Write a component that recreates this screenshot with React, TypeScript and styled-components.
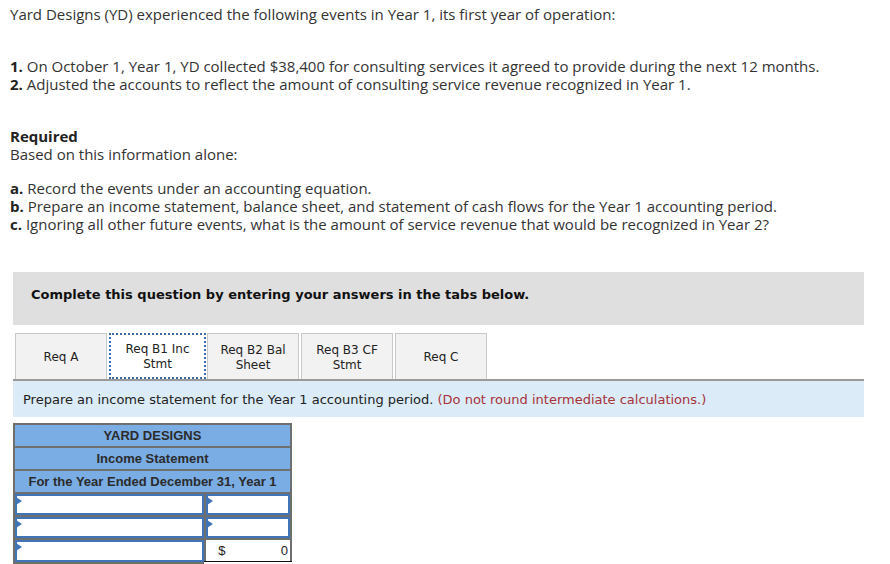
import styled, { createGlobalStyle } from 'styled-components'

const GlobalStyle = createGlobalStyle`
    body {
        margin: 0;
        background: #fff;
        font-family: "Open Sans", "Liberation Sans", sans-serif;
        color: #333;
    }
`

const Page = styled.div`
    padding: 5px 10px 0 10px;
    width: 877px;
    box-sizing: border-box;
`

const Para = styled.p<{ gap?: number }>`
    margin: 0;
    margin-top: ${({ gap }) => gap ?? 0}px;
    font-size: 15px;
    line-height: 18px;
    b {
        color: #222;
        font-weight: 700;
    }
`

const Prompt = styled.div`
    margin: 39px 3px 0 3px;
    background: #dfdfdf;
    height: 53px;
    box-sizing: border-box;
    display: flex;
    align-items: center;
    padding: 0 0 8px 18px;
    font-family: "DejaVu Sans", Verdana, sans-serif;
    font-weight: 700;
    font-size: 13px;
    color: #111;
`

const TabBar = styled.div`
    margin: 8px 3px 0 3px;
    display: flex;
    gap: 2px;
    padding-left: 2px;
    border-bottom: 2px solid #9a9a9a;
`

const Tab = styled.div<{ active?: boolean }>`
    width: ${({ active }) => (active ? 97 : 92)}px;
    height: 46px;
    box-sizing: border-box;
    display: flex;
    align-items: center;
    justify-content: center;
    padding-top: 2px;
    text-align: center;
    font-family: "DejaVu Sans", Verdana, sans-serif;
    font-size: 12px;
    line-height: 15px;
    color: #222;
    background: ${({ active }) => (active ? '#fff' : '#f2f2f2')};
    border: ${({ active }) => (active ? '2px dotted #3b6cb0' : '1px solid #c8c8c8')};
    border-bottom: ${({ active }) => (active ? '2px dotted #3b6cb0' : 'none')};
    margin-bottom: ${({ active }) => (active ? '-2px' : '0')};
    margin-right: ${({ active }) => (active ? '-1px' : '0')};
`

const Instruction = styled.div`
    margin: 0 3px;
    background: #dbebf8;
    height: 36px;
    display: flex;
    align-items: center;
    padding-left: 10px;
    font-family: "DejaVu Sans", Verdana, sans-serif;
    font-size: 13px;
    color: #222;
    span {
        color: #a8323a;
    }
`

const Sheet = styled.table`
    margin: 6px 0 0 3px;
    border-collapse: collapse;
    width: 279px;
    font-family: "Liberation Sans", Arial, sans-serif;
`

const HeadCell = styled.td`
    background: #7aade4;
    border: 2px solid #6f6f6f;
    height: 21px;
    padding: 0;
    text-align: center;
    font-size: 13px;
    font-weight: 700;
    color: #2b2b2b;
`

const Cell = styled.td<{ w: number }>`
    width: ${({ w }) => w}px;
    height: 21px;
    padding: 0;
    border: 2px solid #6f6f6f;
    background: #fff;
    position: relative;
`

const Input = styled.div<{ marker?: boolean }>`
    position: absolute;
    inset: 0;
    border: 2px solid #3f74b6;
    background: #fff;
    &::before {
        content: '';
        display: ${({ marker }) => (marker ? 'block' : 'none')};
        position: absolute;
        left: -1px;
        top: 1px;
        border-left: 6px solid #3f74b6;
        border-top: 4px solid transparent;
        border-bottom: 4px solid transparent;
    }
`

const TotalCell = styled.td`
    height: 21px;
    padding: 0 2px 0 12px;
    border: 2px solid #6f6f6f;
    border-top: 2px solid #111;
    border-bottom: 4px double #111;
    background: #fff;
    font-size: 13px;
    color: #222;
    div {
        display: flex;
        justify-content: space-between;
    }
`

export default function App() {
    return (
        <>
            <GlobalStyle />
            <Page>
                <Para>Yard Designs (YD) experienced the following events in Year 1, its first year of operation:</Para>
                <Para gap={34}>
                    <b>1.</b> On October 1, Year 1, YD collected $38,400 for consulting services it agreed to provide during the next 12 months.
                </Para>
                <Para>
                    <b>2.</b> Adjusted the accounts to reflect the amount of consulting service revenue recognized in Year 1.
                </Para>
                <Para gap={34}>
                    <b>Required</b>
                </Para>
                <Para>Based on this information alone:</Para>
                <Para gap={16}>
                    <b>a.</b> Record the events under an accounting equation.
                </Para>
                <Para>
                    <b>b.</b> Prepare an income statement, balance sheet, and statement of cash flows for the Year 1 accounting period.
                </Para>
                <Para>
                    <b>c.</b> Ignoring all other future events, what is the amount of service revenue that would be recognized in Year 2?
                </Para>

                <Prompt>Complete this question by entering your answers in the tabs below.</Prompt>

                <TabBar>
                    <Tab>Req A</Tab>
                    <Tab active>Req B1 Inc<br />Stmt</Tab>
                    <Tab>Req B2 Bal<br />Sheet</Tab>
                    <Tab>Req B3 CF<br />Stmt</Tab>
                    <Tab>Req C</Tab>
                </TabBar>
                <Instruction>
                    Prepare an income statement for the Year 1 accounting period.&nbsp;<span>(Do not round intermediate calculations.)</span>
                </Instruction>

                <Sheet>
                    <tbody>
                        <tr><HeadCell colSpan={2}>YARD DESIGNS</HeadCell></tr>
                        <tr><HeadCell colSpan={2}>Income Statement</HeadCell></tr>
                        <tr><HeadCell colSpan={2}>For the Year Ended December 31, Year 1</HeadCell></tr>
                        <tr>
                            <Cell w={194}><Input marker /></Cell>
                            <Cell w={85}><Input marker /></Cell>
                        </tr>
                        <tr>
                            <Cell w={194}><Input marker /></Cell>
                            <Cell w={85}><Input marker /></Cell>
                        </tr>
                        <tr>
                            <Cell w={194}><Input marker /></Cell>
                            <TotalCell><div><span>$</span><span>0</span></div></TotalCell>
                        </tr>
                    </tbody>
                </Sheet>
            </Page>
        </>
    )
}
